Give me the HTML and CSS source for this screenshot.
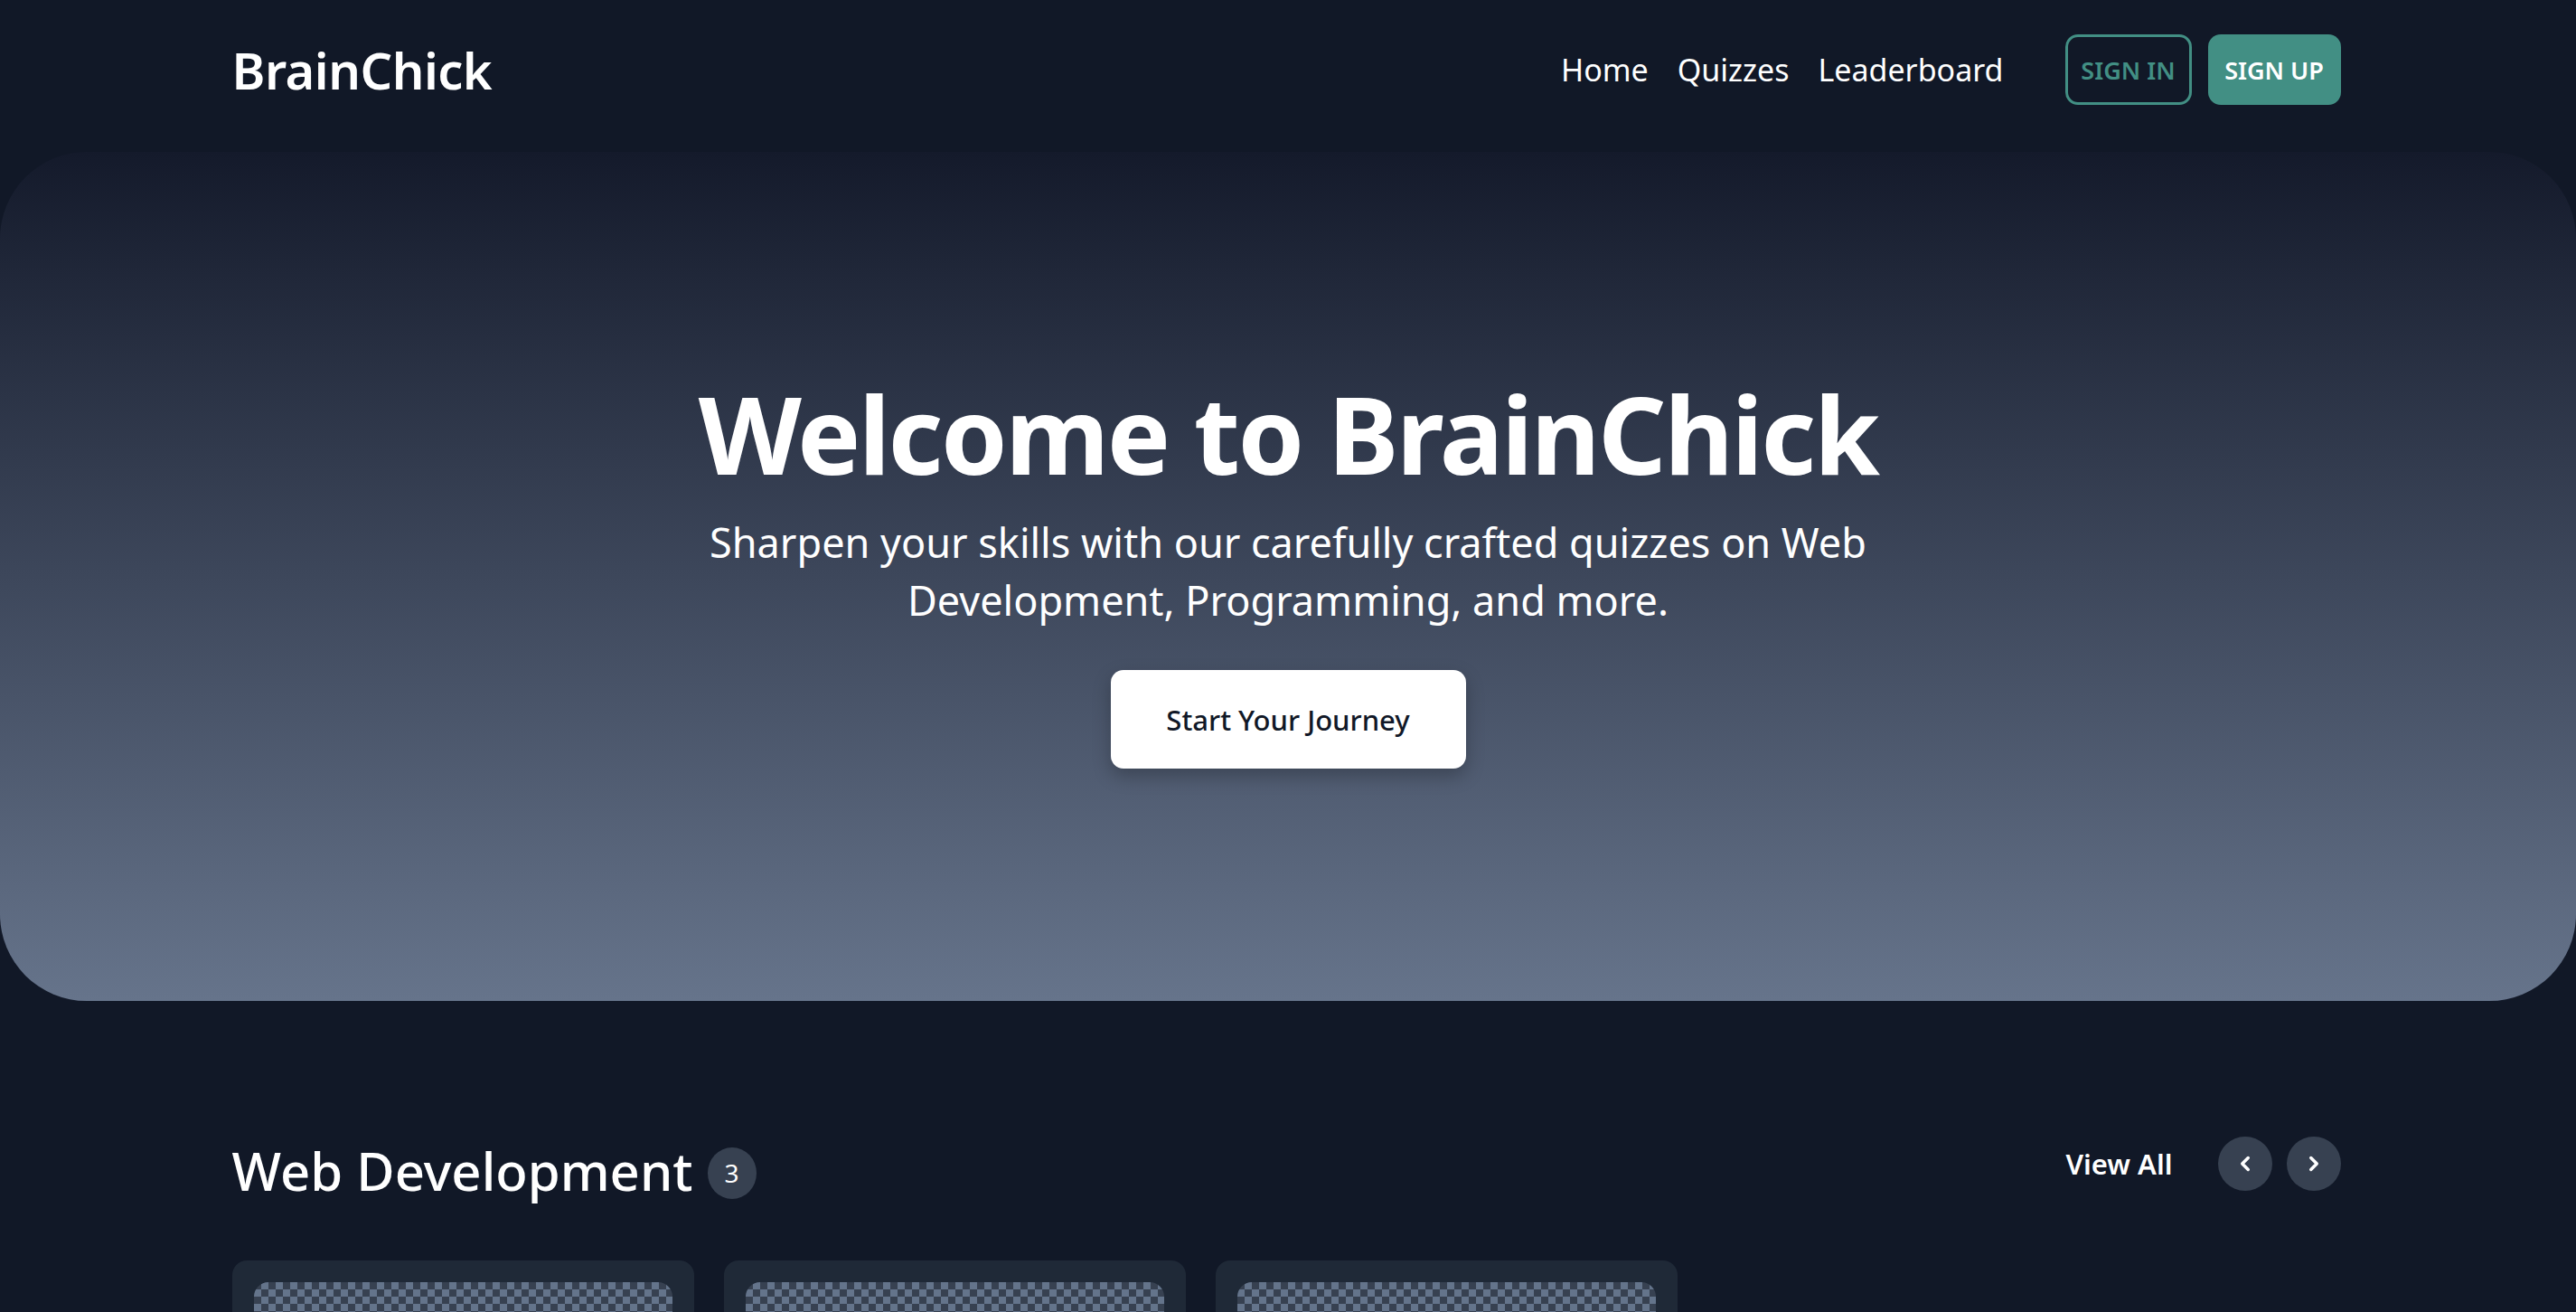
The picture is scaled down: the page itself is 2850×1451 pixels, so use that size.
FILE: index.html
```html
<!DOCTYPE html>
<html lang="en">
<head>
<meta charset="utf-8">
<title>BrainChick</title>
<link rel="stylesheet" href="styles.css">
</head>
<body>
<header class="navbar">
  <a class="logo" href="#">BrainChick</a>
  <nav class="nav">
    <ul class="nav-links">
      <li><a href="#">Home</a></li>
      <li><a href="#">Quizzes</a></li>
      <li><a href="#">Leaderboard</a></li>
    </ul>
    <div class="auth">
      <a class="btn-outline" href="#">Sign In</a>
      <a class="btn-solid" href="#">Sign Up</a>
    </div>
  </nav>
</header>

<section class="hero">
  <h1 class="hero-title">Welcome to BrainChick</h1>
  <p class="hero-sub">Sharpen your skills with our carefully crafted quizzes on Web Development, Programming, and more.</p>
  <a class="hero-btn" href="#">Start Your Journey</a>
</section>

<section class="category">
  <div class="category-head">
    <div class="category-title">
      <h2>Web Development</h2>
      <span class="count">3</span>
    </div>
    <div class="category-actions">
      <a class="view-all" href="#">View All</a>
      <button class="arrow" aria-label="Previous">
        <svg viewBox="0 0 24 24" width="26" height="26"><path d="M15 6l-6 6 6 6" fill="none" stroke="#fff" stroke-width="3.2" stroke-linecap="round" stroke-linejoin="round"/></svg>
      </button>
      <button class="arrow" aria-label="Next">
        <svg viewBox="0 0 24 24" width="26" height="26"><path d="M9 6l6 6-6 6" fill="none" stroke="#fff" stroke-width="3.2" stroke-linecap="round" stroke-linejoin="round"/></svg>
      </button>
    </div>
  </div>
  <div class="cards">
    <article class="card"><div class="thumb"></div></article>
    <article class="card"><div class="thumb"></div></article>
    <article class="card"><div class="thumb"></div></article>
  </div>
</section>
</body>
</html>
```

FILE: styles.css
```css
* { box-sizing: border-box; }

::-webkit-scrollbar { width: 4px; }
::-webkit-scrollbar-track { background: #3c3c3c; }
::-webkit-scrollbar-thumb { background: #8a8a8a; }

html, body {
  margin: 0;
  padding: 0;
  background: #111827;
}

body {
  font-family: "Noto Sans", "Open Sans", sans-serif;
  color: #ffffff;
}

a { color: inherit; text-decoration: none; }

.navbar {
  display: flex;
  align-items: center;
  justify-content: space-between;
  height: 168px;
  padding: 0 calc(9% + 4px) 14px 9%;
}

.logo {
  font-size: 56px;
  font-weight: 600;
  letter-spacing: -0.5px;
}

.nav {
  display: flex;
  align-items: center;
  gap: 68px;
}

.nav-links {
  display: flex;
  gap: 32px;
  list-style: none;
  margin: 0;
  padding: 0;
  font-size: 34px;
}

.auth {
  display: flex;
  gap: 18px;
}

.btn-outline,
.btn-solid {
  display: flex;
  align-items: center;
  justify-content: center;
  height: 78px;
  border-radius: 14px;
  font-size: 27px;
  font-weight: 600;
  text-transform: uppercase;
}

.btn-outline {
  width: 140px;
  border: 3px solid #428f84;
  color: #428f84;
}

.btn-solid {
  width: 147px;
  background: #428f84;
  color: #ffffff;
}

.hero {
  height: 939px;
  border-radius: 96px;
  background: linear-gradient(to bottom, #141a2b 0%, #66748b 100%);
  display: flex;
  flex-direction: column;
  align-items: center;
  justify-content: center;
  text-align: center;
  padding-bottom: 16px;
}

.hero-title {
  margin: 0;
  font-size: 118px;
  font-weight: 700;
  line-height: 1.2;
  letter-spacing: -2.5px;
}

.hero-sub {
  margin: 18px 0 0;
  max-width: 1380px;
  font-size: 45px;
  line-height: 64px;
}

.hero-btn {
  margin-top: 45px;
  width: 393px;
  height: 109px;
  display: flex;
  align-items: center;
  justify-content: center;
  background: #ffffff;
  color: #111827;
  border-radius: 14px;
  font-size: 31px;
  font-weight: 500;
  box-shadow: 0 8px 20px rgba(0, 0, 0, 0.25);
}

.category {
  padding: 138px calc(9% + 4px) 80px 9%;
}

.category-head {
  display: flex;
  align-items: center;
  justify-content: space-between;
}

.category-title {
  display: flex;
  align-items: flex-end;
  gap: 16px;
}

.category-title h2 {
  margin: 15px 0 0;
  font-size: 58px;
  font-weight: 500;
  line-height: 1.2;
}

.count {
  display: flex;
  align-items: center;
  justify-content: center;
  width: 54px;
  height: 57px;
  margin-bottom: 4px;
  border-radius: 50%;
  background: #374151;
  font-size: 28px;
}

.category-actions {
  display: flex;
  align-items: center;
  gap: 16px;
}

.view-all {
  font-size: 31px;
  font-weight: 600;
  margin-right: 34px;
}

.arrow {
  width: 60px;
  height: 60px;
  border: 0;
  border-radius: 50%;
  background: #374151;
  display: flex;
  align-items: center;
  justify-content: center;
  padding: 0;
}

.cards {
  display: flex;
  gap: 33px;
  margin-top: 64px;
}

.card {
  width: 511px;
  padding: 24px;
  border-radius: 16px;
  background: #1f2937;
}

.thumb {
  height: 300px;
  border-radius: 16px;
  background: repeating-conic-gradient(#64748b 0 25%, #374151 0 50%) 0 0 / 16px 16px;
}
```
